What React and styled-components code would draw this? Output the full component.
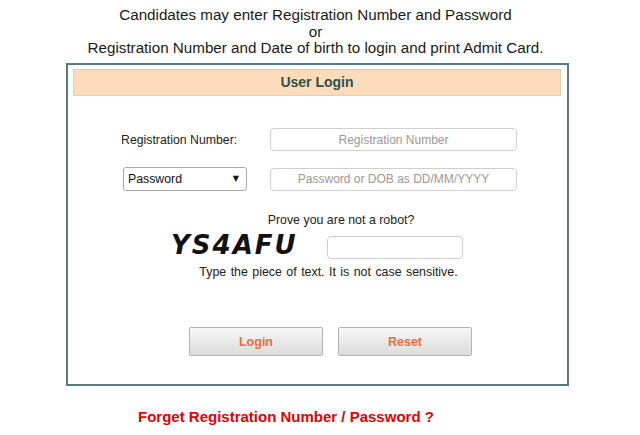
import styled, { createGlobalStyle } from 'styled-components';

const GlobalStyle = createGlobalStyle`
  body {
    margin: 0;
    background: #fff;
    font-family: "Liberation Sans", Arial, sans-serif;
    color: #222;
  }
`;

export default function App() {
  return (
    <>
      <GlobalStyle />
      <StyledPage>
        <Intro>
          Candidates may enter Registration Number and Password
          <br />
          or
          <br />
          Registration Number and Date of birth to login and print Admit Card.
        </Intro>

        <Panel>
          <PanelHeader>User Login</PanelHeader>

          <LoginGrid>
            <FieldLabel>Registration Number:</FieldLabel>
            <TextField placeholder="Registration Number" />

            <SelectWrap>
              <Select defaultValue="password">
                <option value="password">Password</option>
                <option value="dob">Date of Birth</option>
              </Select>
              <SelectArrow>&#9660;</SelectArrow>
            </SelectWrap>
            <TextField placeholder="Password or DOB as DD/MM/YYYY" />
          </LoginGrid>

          <Note $shift={48} $top={22}>Prove you are not a robot?</Note>
          <CaptchaRow>
            <CaptchaText>YS4AFU</CaptchaText>
            <CaptchaInput />
          </CaptchaRow>
          <Note $shift={23} $top={6} $wide>Type the piece of text. It is not case sensitive.</Note>

          <ButtonRow>
            <ActionButton>Login</ActionButton>
            <ActionButton type="reset">Reset</ActionButton>
          </ButtonRow>
        </Panel>

        <ForgotLink href="#">Forget Registration Number / Password ?</ForgotLink>
      </StyledPage>
    </>
  );
}

const StyledPage = styled.div`
  width: 635px;
  display: flex;
  flex-direction: column;
`;

const Intro = styled.div`
  padding: 7px 4px 0 0;
  margin-bottom: 6.5px;
  text-align: center;
  font-size: 15.2px;
  line-height: 16.5px;
  color: #1a1a1a;
`;

const Panel = styled.section`
  box-sizing: border-box;
  width: 503px;
  margin: 0 auto;
  padding: 4px 6px 28px 5px;
  border: 2px solid #5a7a7e;
  display: flex;
  flex-direction: column;
`;

const PanelHeader = styled.div`
  box-sizing: border-box;
  height: 27px;
  line-height: 25px;
  background: #fcdcbb;
  border: 1px solid #e2cdb6;
  text-align: center;
  font-size: 14px;
  font-weight: bold;
  color: #2f4f4f;
`;

const LoginGrid = styled.div`
  display: grid;
  grid-template-columns: 149px 247px;
  row-gap: 16px;
  align-items: center;
  margin: 32px 0 0 48px;
`;

const FieldLabel = styled.label`
  font-size: 12.3px;
  color: #222;
`;

const TextField = styled.input`
  box-sizing: border-box;
  width: 247px;
  height: 23px;
  border: 1px solid #cfcfcf;
  border-radius: 4px;
  font-family: inherit;
  font-size: 12px;
  text-align: center;
  outline: none;
  &::placeholder {
    color: #9a9a9a;
  }
`;

const SelectWrap = styled.div`
  position: relative;
  width: 124px;
  height: 24px;
  margin-left: 2px;
`;

const Select = styled.select`
  appearance: none;
  box-sizing: border-box;
  width: 100%;
  height: 100%;
  padding: 0 0 0 4px;
  border: 1px solid #a9a9a9;
  border-radius: 3px;
  background: #fff;
  font-family: inherit;
  font-size: 12.3px;
  color: #111;
  outline: none;
`;

const SelectArrow = styled.span`
  position: absolute;
  right: 8px;
  top: 8px;
  font-family: "DejaVu Sans", sans-serif;
  font-size: 8px;
  line-height: 8px;
  color: #111;
  pointer-events: none;
`;

const Note = styled.div`
  margin-top: ${p => p.$top}px;
  padding-left: ${p => p.$shift}px;
  text-align: center;
  font-size: 12.4px;
  line-height: 14px;
  word-spacing: ${p => (p.$wide ? '1px' : '0')};
  color: #222;
`;

const CaptchaRow = styled.div`
  display: flex;
  justify-content: center;
  align-items: flex-start;
  gap: 32px;
  margin-top: 5px;
`;

const CaptchaText = styled.div`
  width: 124px;
  font-family: "DejaVu Sans", Verdana, sans-serif;
  font-size: 26px;
  line-height: 26px;
  font-weight: bold;
  font-style: italic;
  letter-spacing: 2px;
  color: #111;
  white-space: nowrap;
  user-select: none;
`;

const CaptchaInput = styled.input`
  box-sizing: border-box;
  width: 136px;
  height: 23px;
  margin-top: 4px;
  border: 1px solid #cfcfcf;
  border-radius: 4px;
  outline: none;
`;

const ButtonRow = styled.div`
  display: flex;
  justify-content: center;
  gap: 15px;
  margin-top: 48px;
  padding-left: 27px;
`;

const ActionButton = styled.button`
  box-sizing: border-box;
  width: 134px;
  height: 29px;
  border: 1px solid #b3b3b3;
  border-radius: 2px;
  background: linear-gradient(#f8f8f8, #dcdcdc);
  font-family: "Liberation Sans", Arial, sans-serif;
  font-size: 12.5px;
  font-weight: bold;
  color: #f26a3c;
  cursor: pointer;
`;

const ForgotLink = styled.a`
  align-self: flex-start;
  margin: 22px 0 0 138px;
  font-size: 15px;
  line-height: 17px;
  font-weight: bold;
  color: #e60000;
  text-decoration: none;
`;
